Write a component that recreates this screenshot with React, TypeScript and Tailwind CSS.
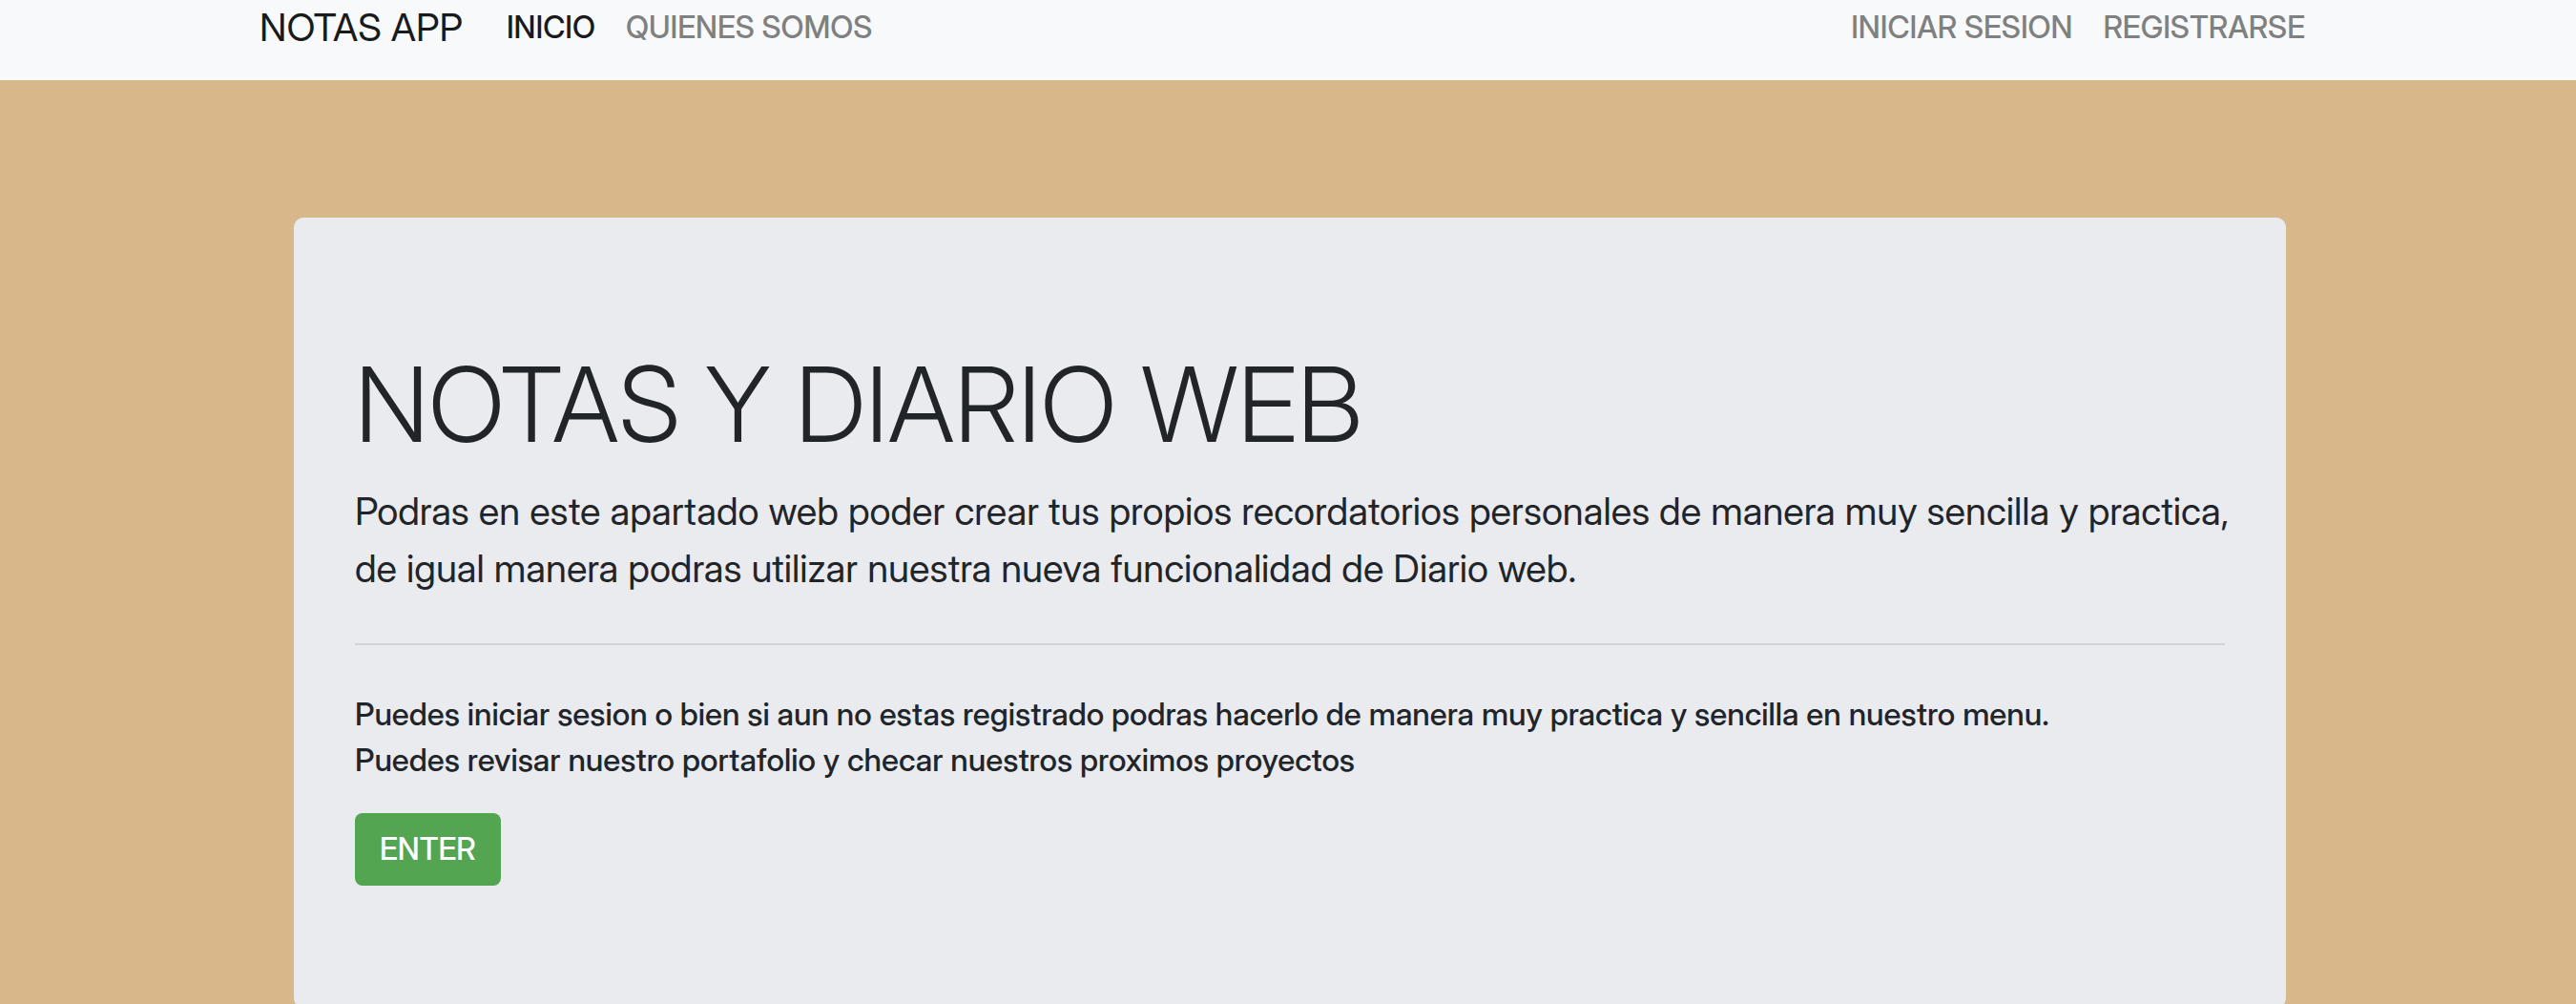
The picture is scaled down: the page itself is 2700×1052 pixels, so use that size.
const navLink = "block text-[32px] leading-[48px] font-medium";

export default function App() {
  return (
    <div className="min-h-screen bg-[#d8b88b] font-['Inter_Display','Inter',sans-serif] text-[#212529]">
      <nav className="bg-[#f8f9fb] pb-[31px]">
        <div className="mx-auto flex max-w-[2280px] items-center pt-[5px] pr-[74px] pl-[62px]">
          <a href="#" className="mr-[46px] text-[40px] leading-[48px] text-[#191a1b]">NOTAS APP</a>
          <ul className="flex gap-8">
            <li><a href="#" className={navLink + " text-[#191a1b]"}>INICIO</a></li>
            <li><a href="#" className={navLink + " text-[#7f8080]"}>QUIENES SOMOS</a></li>
          </ul>
          <ul className="ml-auto flex gap-8">
            <li><a href="#" className={navLink + " text-[#7f8080]"}>INICIAR SESION</a></li>
            <li><a href="#" className={navLink + " text-[#7f8080]"}>REGISTRARSE</a></li>
          </ul>
        </div>
      </nav>
      <main className="mx-auto max-w-[2092px] pt-36 pl-1">
        <section className="rounded-[10px] bg-[#eaebef] px-16 py-32">
          <h1 className="mb-4 text-[109px] leading-[134px] font-light">NOTAS Y DIARIO WEB</h1>
          <p className="-mr-4 text-[40px] leading-[60px]">Podras en este apartado web poder crear tus propios recordatorios personales de manera muy sencilla y practica, de igual manera podras utilizar nuestra nueva funcionalidad de Diario web.</p>
          <hr className="my-12 border-t-2 border-[#d2d4d8]" />
          <p className="text-[33px] leading-[48px] font-medium">Puedes iniciar sesion o bien si aun no estas registrado podras hacerlo de manera muy practica y sencilla en nuestro menu.<br />Puedes revisar nuestro portafolio y checar nuestros proximos proyectos</p>
          <button type="button" className="mt-8 block rounded-lg bg-[#53a551] px-[26px] py-[14px] text-[32px] leading-[48px] font-medium text-white">ENTER</button>
        </section>
      </main>
    </div>
  );
}
